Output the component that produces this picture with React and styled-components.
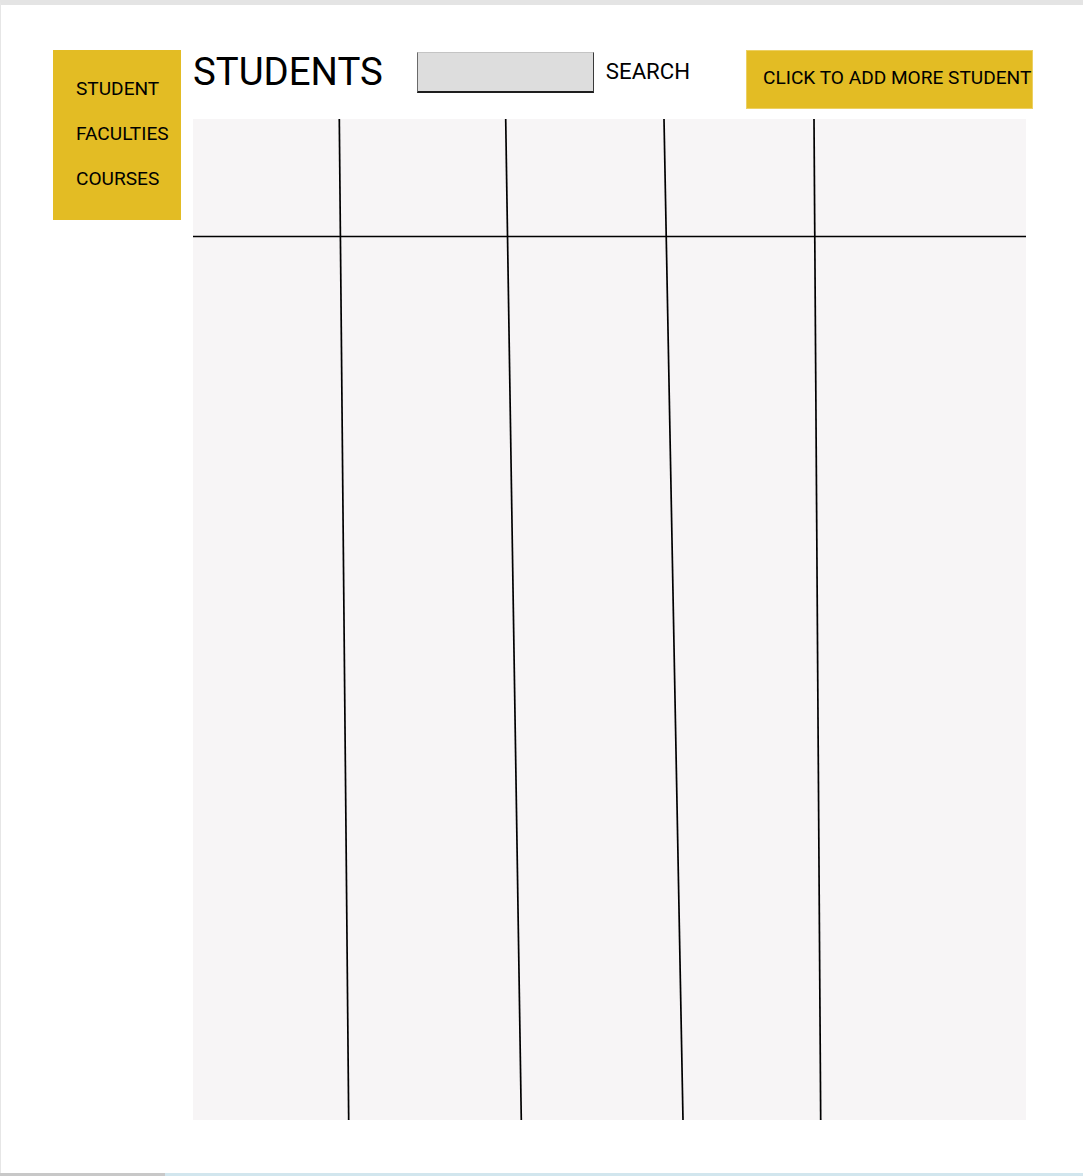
import React from "react";
import styled, { createGlobalStyle } from "styled-components";

const Global = createGlobalStyle`
  html, body { margin: 0; padding: 0; background: #ffffff; }
  body { font-family: Roboto, "Liberation Sans", Arial, sans-serif; color: #000; }
`;

const YELLOW = "#e3bc24";

const Frame = styled.div`
  box-sizing: border-box;
  height: 1173px;
  border-top: 5px solid #e4e4e4;
  border-left: 1px solid #e6e6e6;
  display: flex;
  align-items: flex-start;
  padding: 45px 0 0 52px;
  gap: 12px;
`;

const Sidebar = styled.nav`
  box-sizing: border-box;
  width: 128px;
  height: 170px;
  background: ${YELLOW};
  padding: 16px 0 0 23px;
  display: flex;
  flex-direction: column;
`;

const NavItem = styled.div`
  height: 45px;
  line-height: 45px;
  font-size: 19.1px;
  white-space: nowrap;
`;

const Main = styled.main`
  width: 840px;
  display: flex;
  flex-direction: column;
`;

const Header = styled.header`
  height: 69px;
  display: flex;
  align-items: flex-start;
`;

const Title = styled.h1`
  margin: 2.5px 0 0 0;
  font-size: 38.4px;
  line-height: 1;
  font-weight: 400;
  white-space: nowrap;
`;

const SearchInput = styled.div`
  box-sizing: border-box;
  margin: 2px 0 0 34px;
  width: 177px;
  height: 41px;
  background: #dddddd;
  border-top: 1px solid #c4c4c4;
  border-left: 1px solid #6a6a6a;
  border-right: 1px solid #3a3a3a;
  border-bottom: 2px solid #1e1e1e;
`;

const SearchLabel = styled.div`
  margin: 10.3px 0 0 12px;
  font-size: 22.2px;
  line-height: 1;
  white-space: nowrap;
`;

const AddButton = styled.div`
  box-sizing: border-box;
  margin-left: auto;
  width: 287px;
  height: 59px;
  background: ${YELLOW};
  border: 1px solid #edd062;
  padding: 16.7px 0 0 16px;
  font-size: 19.1px;
  line-height: 1;
  white-space: nowrap;
  overflow: hidden;
`;

const Table = styled.section`
  width: 833px;
  height: 1001px;
  background: #f7f5f6;
`;

const Sketch = styled.svg`
  display: block;
  width: 100%;
  height: 100%;
`;

const Strip = styled.div`
  display: flex;
  height: 3px;
`;

const StripPart = styled.div`
  height: 3px;
  width: ${(p) => p.$w || "auto"};
  flex: ${(p) => (p.$w ? "none" : "1")};
  background: ${(p) => p.$c};
`;

const columnLines = [
  [146.3, 155.7],
  [312.7, 328.3],
  [471, 490],
  [621, 627.7],
];

export default function App() {
  return (
    <>
      <Global />
      <Frame>
        <Sidebar>
          <NavItem>STUDENT</NavItem>
          <NavItem>FACULTIES</NavItem>
          <NavItem>COURSES</NavItem>
        </Sidebar>
        <Main>
          <Header>
            <Title>STUDENTS</Title>
            <SearchInput />
            <SearchLabel>SEARCH</SearchLabel>
            <AddButton>CLICK TO ADD MORE STUDENT</AddButton>
          </Header>
          <Table>
            <Sketch viewBox="0 0 833 1001" preserveAspectRatio="none">
              <line x1="0" y1="117.5" x2="833" y2="117.5" stroke="#000" strokeWidth="1.7" />
              {columnLines.map(([a, b], i) => (
                <line key={i} x1={a} y1="0" x2={b} y2="1001" stroke="#000" strokeWidth="1.7" />
              ))}
            </Sketch>
          </Table>
        </Main>
      </Frame>
      <Strip>
        <StripPart $w="165px" $c="#c8c8c8" />
        <StripPart $c="#d2e6ee" />
      </Strip>
    </>
  );
}
